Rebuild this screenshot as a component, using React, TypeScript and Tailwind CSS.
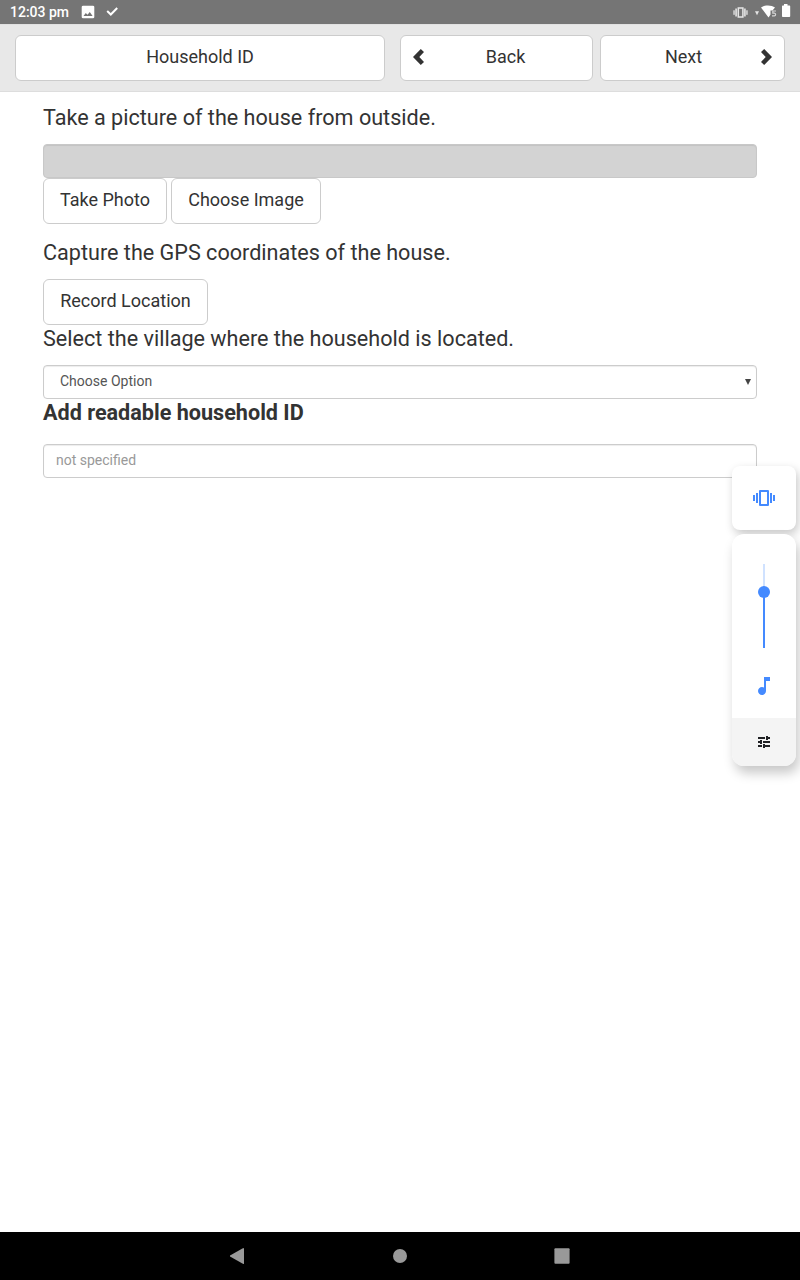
import type { ReactNode } from "react";

function Button({ children, className = "" }: { children: ReactNode; className?: string }) {
  return (
    <button
      type="button"
      className={`flex h-[46px] items-center rounded-md border border-[#ccc] bg-white pb-[3px] text-[18px] leading-6 text-[#333] ${className}`}
    >
      {children}
    </button>
  );
}

function StatusBar() {
  return (
    <div className="flex h-6 shrink-0 items-center bg-[#757575] text-white">
      <span className="ml-[10px] w-[70px] whitespace-nowrap text-[14px] font-medium leading-6">12:03 pm</span>
      <svg className="h-4 w-4" viewBox="0 0 16 16">
        <rect x="1.700" y="1.700" width="12.600" height="12.600" rx="1.400" fill="#fff" />
        <path d="M3.500 12L5.800 9L7.500 10.800L9.800 8L12.600 12z" fill="#757575" />
      </svg>
      <svg className="ml-2 h-4 w-4" viewBox="0 0 16 16" fill="none" stroke="currentColor" strokeWidth="2">
        <path d="M3.200 7L6.800 10.500L13.200 4" />
      </svg>
      <svg className="ml-auto mr-2 h-6 w-[62px]" viewBox="0 0 62 24" fill="#fff">
        <g fill="#d8d8d8">
          <rect x="3.300" y="10.300" width="1.500" height="4.500" />
          <rect x="5.200" y="8.500" width="1.800" height="8" />
          <rect x="14" y="8.500" width="1.800" height="8" />
          <rect x="16.200" y="10.300" width="1.500" height="4.500" />
        </g>
        <rect x="8.300" y="8" width="4.600" height="9" fill="none" stroke="#e6e6e6" strokeWidth="1.500" />
        <path d="M25 11.300h4l-2 4z" fill="#e6e6e6" />
        <path d="M31 7.500C34.500 4.700 41.500 4.700 45 7.500L42.500 10.500H40.500V14.500L38.500 17.400z" />
        <path d="M46 11h-3.200v2.200h1.500a1.200 1.200 0 010 2.600H42" fill="none" stroke="#d6d6d6" strokeWidth="1.200" />
        <path d="M54 4h3.500v1.500h2q.7 0 .7.700v10q0 .8-.8.800h-6.600q-.8 0-.8-.8v-10q0-.7.7-.7H54z" />
      </svg>
    </div>
  );
}

function TopNav() {
  return (
    <div className="flex h-[68px] shrink-0 border-y border-b-[#ddd] border-t-[#e1e1e1] bg-[#e8e8e8] pl-[15px] pt-[10px]">
      <Button className="w-[370px] justify-center">Household ID</Button>
      <Button className="ml-[15px] w-[193px] pl-[12px] pr-[13px]">
        <svg className="relative top-[0.500px] h-4 w-[11px]" viewBox="0 0 11 16" fill="#333">
          <path d="M0 8L7.800 0L11 3L6.300 8L11 13L7.800 16z" />
        </svg>
        <span className="flex-1 pl-[15px] pr-[7px] text-center">Back</span>
      </Button>
      <Button className="ml-[7px] w-[185px] pl-[13px] pr-[12px]">
        <span className="flex-1 pl-[4px] pr-[12px] text-center">Next</span>
        <svg className="relative top-[0.500px] h-4 w-[11px]" viewBox="0 0 11 16" fill="#333">
          <path d="M11 8L3.200 0L0 3L4.700 8L0 13L3.200 16z" />
        </svg>
      </Button>
    </div>
  );
}

function VolumePanel() {
  return (
    <aside className="absolute right-1 top-[466px] flex w-16 flex-col gap-1">
      <div className="flex h-16 items-center justify-center rounded-lg bg-white shadow-[2px_4px_10px_rgba(0,0,0,0.22)]">
        <svg className="h-6 w-6" viewBox="0 0 24 24" fill="#448aff">
          <path d="M1 15h2V9H1zM4 17h2V7H4zM21 9v6h2V9zM18 17h2V7h-2zM16 4H8a1 1 0 00-1 1v14a1 1 0 001 1h8a1 1 0 001-1V5a1 1 0 00-1-1zM15 18H9V6h6z" />
        </svg>
      </div>
      <div className="flex h-[232px] flex-col items-center overflow-hidden rounded-xl bg-white shadow-[3px_7px_12px_rgba(0,0,0,0.22)]">
        <svg className="mt-[30px] h-[84px] w-3" viewBox="0 0 12 84">
          <path d="M5 0h2v28H5z" fill="#d0e2ff" />
          <path d="M5 28h2v56H5z" fill="#448aff" />
          <circle cx="6" cy="28" r="6" fill="#448aff" />
        </svg>
        <svg className="mt-[26px] h-6 w-6" viewBox="0 0 24 24" fill="#448aff">
          <path d="M12 3v10.550c-.59-.34-1.270-.55-2-.55-2.210 0-4 1.790-4 4s1.790 4 4 4 4-1.790 4-4V7h4V3z" />
        </svg>
        <div className="mt-auto flex h-12 w-full items-center justify-center bg-[#f4f4f4]">
          <svg className="h-4 w-4" viewBox="0 0 16 16" fill="#202124">
            <path d="M2 3h7v2H2zM10 2h2v1h2v2h-2v1h-2zM2 7h2V6h2v4H4V9H2zM7 7h7v2H7zM2 11h4v2H2zM7 10h2v1h5v2H9v1H7z" />
          </svg>
        </div>
      </div>
    </aside>
  );
}

function NavigationBar() {
  return (
    <div className="flex h-12 shrink-0 items-center justify-center gap-[146px] bg-black">
      <svg className="h-4 w-4" viewBox="0 0 16 16" fill="#999">
        <path d="M0 7.500L13.300 0Q14 0 14 .6V15.400Q14 16 13.300 16L0 8.500Q-.4 8 0 7.500z" />
      </svg>
      <svg className="h-4 w-4" viewBox="0 0 16 16" fill="#999">
        <circle cx="8" cy="8" r="7" />
      </svg>
      <svg className="h-4 w-4" viewBox="0 0 16 16" fill="#999">
        <rect x=".4" y=".3" width="15.200" height="15.400" rx="1" />
      </svg>
    </div>
  );
}

export default function App() {
  return (
    <div
      className="relative flex h-[1280px] w-[800px] flex-col overflow-hidden bg-white text-[#333]"
      style={{ fontFamily: 'Roboto, "Liberation Sans", sans-serif' }}
    >
      <StatusBar />
      <TopNav />
      <main className="flex flex-1 flex-col px-[43px] pt-[10px]">
        <p className="text-[21.6px] leading-[31px]">Take a picture of the house from outside.</p>
        <div className="mt-[11px] h-[34px] rounded border border-[#c8c8c8] bg-[#d3d3d3] shadow-[inset_0_1px_1px_rgba(0,0,0,0.075)]" />
        <div className="flex gap-1">
          <Button className="w-[124px] justify-center">Take Photo</Button>
          <Button className="w-[150px] justify-center">Choose Image</Button>
        </div>
        <p className="mt-[13px] text-[21.6px] leading-[31px]">Capture the GPS coordinates of the house.</p>
        <Button className="mt-[11px] w-[165px] justify-center">Record Location</Button>
        <p className="mt-[-2px] text-[21.6px] leading-[31px]">Select the village where the household is located.</p>
        <div className="mt-[11px] flex h-[34px] items-center justify-between rounded border border-[#ccc] pb-[2px] pl-4 pr-[5px] text-[14px] leading-5 text-[#555] shadow-[inset_0_1px_1px_rgba(0,0,0,0.075)]">
          <span>Choose Option</span>
          <svg className="relative top-px h-[6px] w-[6px]" viewBox="0 0 6 6" fill="#444">
            <path d="M0 0h6L3 6z" />
          </svg>
        </div>
        <p className="mt-[-2px] text-[21.6px] font-bold leading-[31px]">Add readable household ID</p>
        <input
          className="mt-[16px] h-[34px] rounded border border-[#ccc] px-3 pb-[2px] text-[14px] leading-5 shadow-[inset_0_1px_1px_rgba(0,0,0,0.075)] placeholder:text-[#999]"
          placeholder="not specified"
        />
      </main>
      <NavigationBar />
      <VolumePanel />
    </div>
  );
}
